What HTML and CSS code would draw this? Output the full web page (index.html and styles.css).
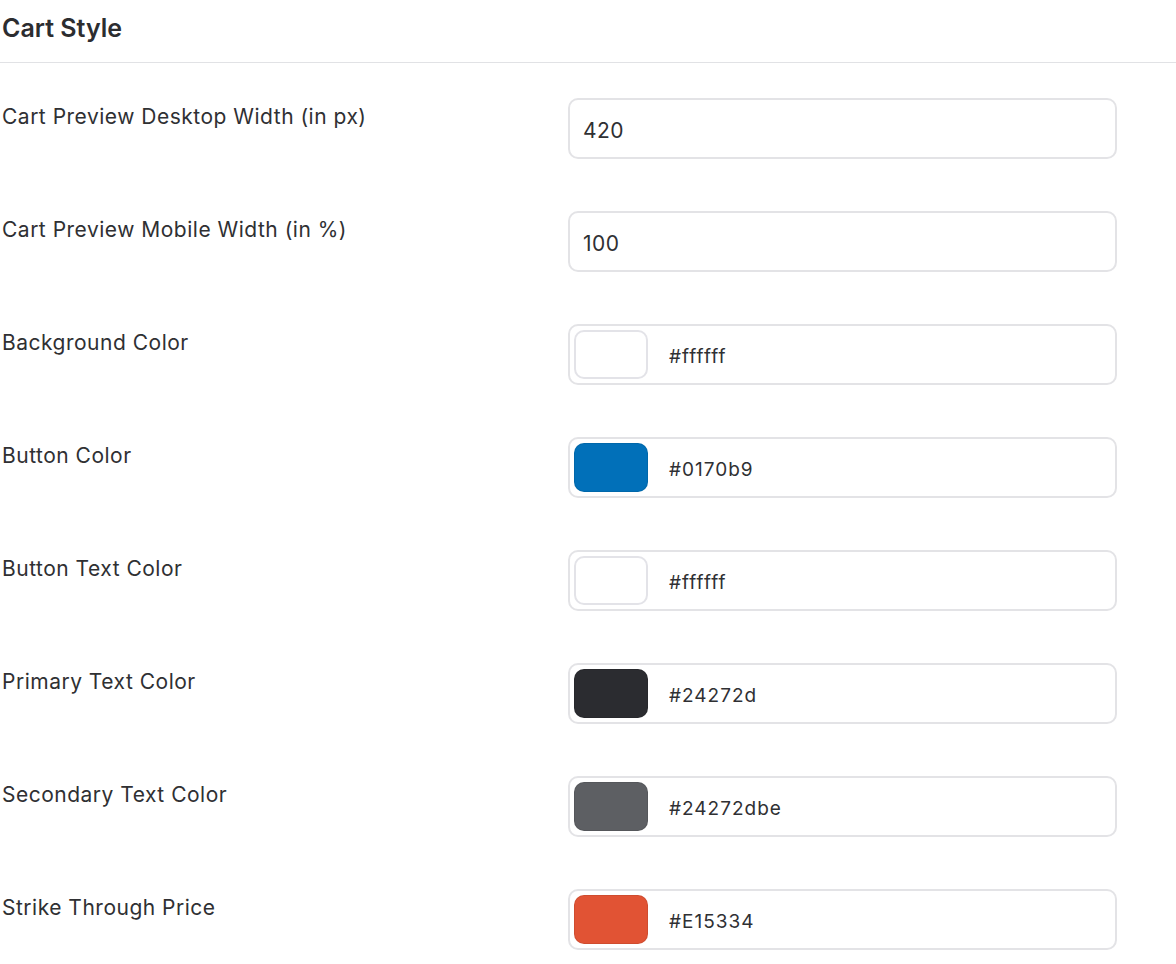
FILE: index.html
```html
<!DOCTYPE html>
<html lang="en">
<head>
  <meta charset="UTF-8">
  <title>Cart Style</title>
  <link rel="stylesheet" href="styles.css">
</head>
<body>
  <div class="section">
    <h2 class="section-title">Cart Style</h2>

    <div class="settings">
      <div class="row">
        <label>Cart Preview Desktop Width (in px)</label>
        <div class="field"><span class="value">420</span></div>
      </div>
      <div class="row">
        <label>Cart Preview Mobile Width (in %)</label>
        <div class="field"><span class="value">100</span></div>
      </div>
      <div class="row">
        <label>Background Color</label>
        <div class="field color">
          <span class="swatch light" style="background:#ffffff"></span>
          <span class="hex">#ffffff</span>
        </div>
      </div>
      <div class="row">
        <label>Button Color</label>
        <div class="field color">
          <span class="swatch" style="background:#0170b9"></span>
          <span class="hex">#0170b9</span>
        </div>
      </div>
      <div class="row">
        <label>Button Text Color</label>
        <div class="field color">
          <span class="swatch light" style="background:#ffffff"></span>
          <span class="hex">#ffffff</span>
        </div>
      </div>
      <div class="row">
        <label>Primary Text Color</label>
        <div class="field color">
          <span class="swatch" style="background:#2b2c30"></span>
          <span class="hex">#24272d</span>
        </div>
      </div>
      <div class="row">
        <label>Secondary Text Color</label>
        <div class="field color">
          <span class="swatch" style="background:#5d5f63"></span>
          <span class="hex">#24272dbe</span>
        </div>
      </div>
      <div class="row">
        <label>Strike Through Price</label>
        <div class="field color">
          <span class="swatch" style="background:#e15334"></span>
          <span class="hex">#E15334</span>
        </div>
      </div>
    </div>
  </div>
</body>
</html>
```

FILE: styles.css
```css
body {
  margin: 0;
  background: #ffffff;
  font-family: Inter, "Liberation Sans", Arial, sans-serif;
  color: #2f3033;
}

.section-title {
  margin: 0;
  padding: 12px 0 18px 2px;
  font-size: 25px;
  font-weight: 600;
  line-height: 32px;
  color: #2c2d30;
  border-bottom: 1px solid #e1e2e5;
}

.settings {
  display: flex;
  flex-direction: column;
  gap: 52px;
  padding: 35px 0 0 2px;
}

.row {
  display: flex;
  align-items: flex-start;
}

.row label {
  width: 566px;
  font-size: 21px;
  line-height: 28px;
  letter-spacing: 0.5px;
  padding-top: 5px;
}

.field {
  width: 549px;
  height: 61px;
  box-sizing: border-box;
  border: 2px solid #e3e3e6;
  border-radius: 10px;
  display: flex;
  align-items: center;
  padding: 0 13px;
}

.field .value {
  font-size: 21px;
  letter-spacing: 0.5px;
  padding-top: 3px;
}

.field.color {
  padding: 0 4px;
}

.swatch {
  width: 74px;
  height: 49px;
  border-radius: 10px;
  box-sizing: border-box;
  border: 1px solid rgba(0, 0, 0, 0.08);
}

.swatch.light {
  border: 2px solid #e3e3e8;
}

.hex {
  margin-left: 21px;
  font-size: 19px;
  letter-spacing: 1px;
  padding-top: 3px;
}
```
